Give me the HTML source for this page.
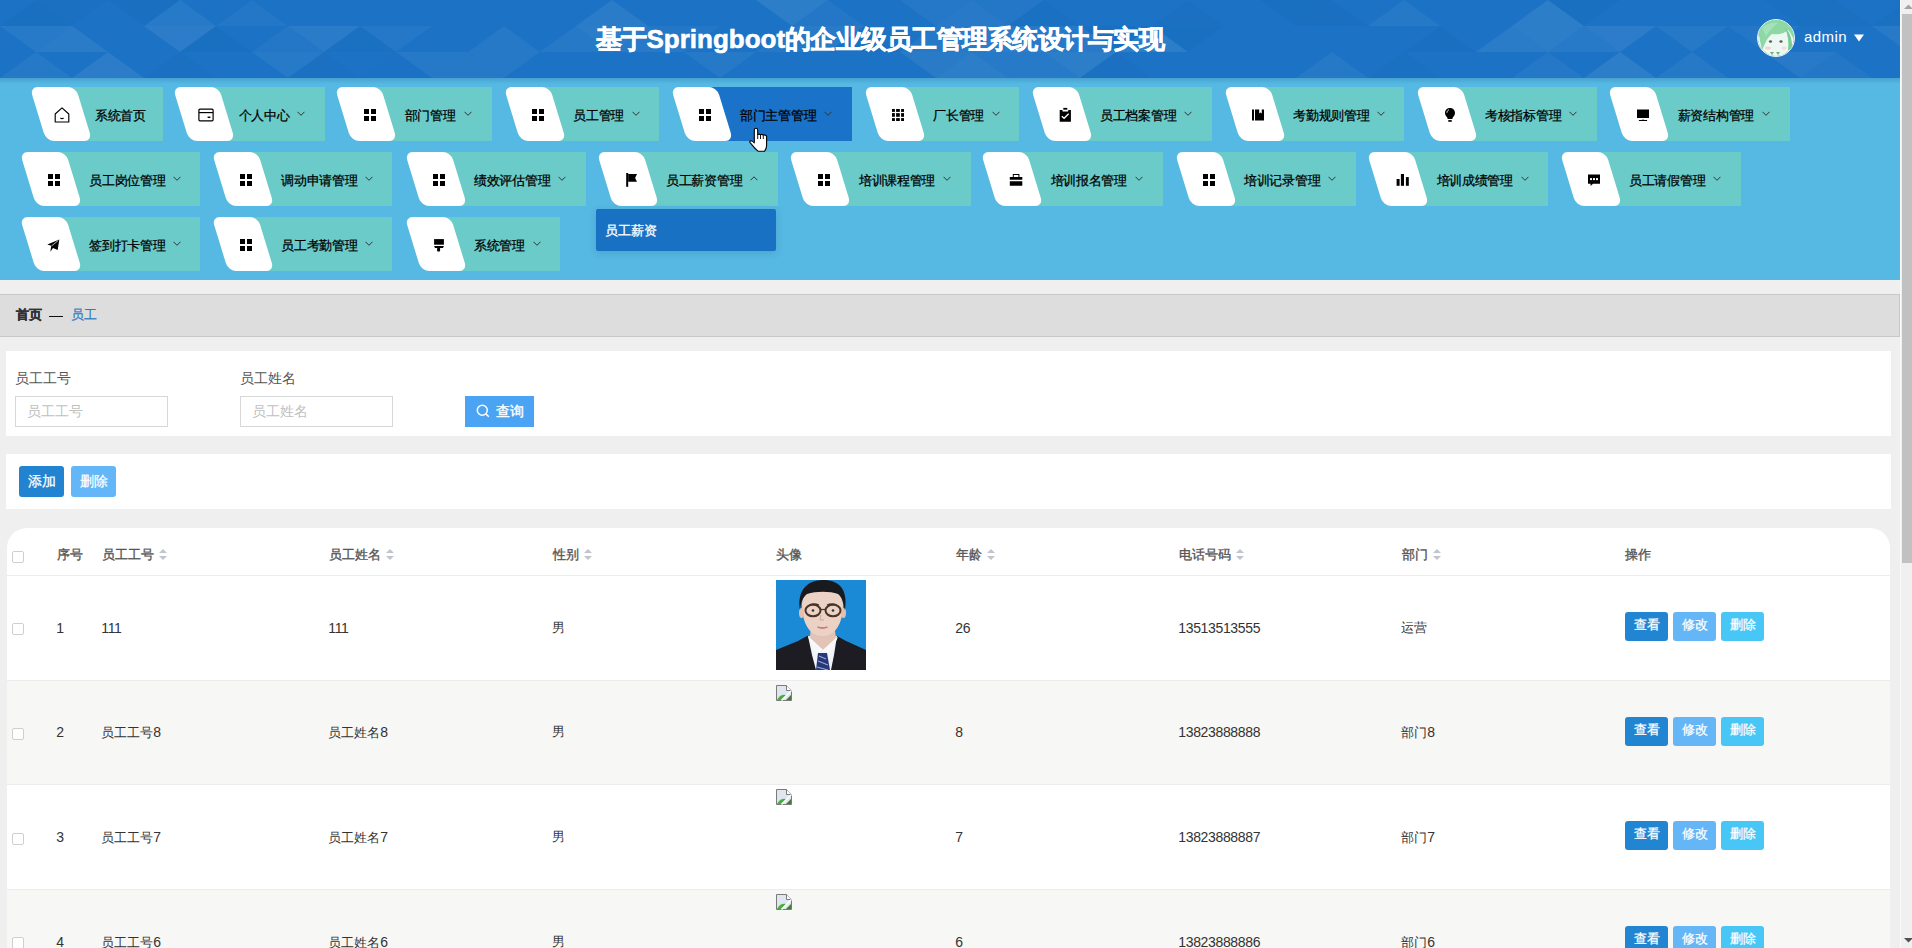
<!DOCTYPE html>
<html><head><meta charset="utf-8"><title>员工</title>
<style>
*{box-sizing:border-box;margin:0;padding:0}
html,body{width:1912px;height:948px;overflow:hidden;background:#efefef;font-family:"Liberation Sans", sans-serif;}
.abs{position:absolute}
#hdr{position:absolute;left:0;top:0;width:1900px;height:78px;background:#1c73c5;overflow:hidden}
#nav{position:absolute;left:0;top:78px;width:1900px;height:202px;background:#56b9e3}
#navsh{position:absolute;left:0;top:78px;width:1900px;height:6px;background:linear-gradient(rgba(30,90,150,0.25),rgba(30,90,150,0))}
.tb{position:absolute;height:54px}
.wp{position:absolute;width:46px;height:54px;background:#fff;border-radius:8px;transform:skewX(17deg)}
.ic{position:absolute;width:20px;height:20px;display:flex;align-items:center;justify-content:center}
.ic svg.f{fill:#000}
.nt{position:absolute;height:54px;line-height:57px;font-size:13px;color:#000;white-space:nowrap;letter-spacing:-0.3px;-webkit-text-stroke:0.25px #000}
.chev{position:absolute}
#title{position:absolute;left:596px;top:22px;font-size:26px;font-weight:bold;color:#fff;white-space:nowrap;line-height:34px;-webkit-text-stroke:0.6px #fff}
#title .cj{letter-spacing:-0.75px}
#avatar{position:absolute;left:1757px;top:18.5px;width:38px;height:38px;border-radius:50%;overflow:hidden;border:1.5px solid #e8f6f4}
#uname{position:absolute;left:1804px;top:27px;font-size:15px;color:#fff;line-height:20px;letter-spacing:0.45px}
#utri{position:absolute;left:1853.5px;top:34px}
#crumb{position:absolute;left:0;top:294px;width:1900px;height:43px;background:#dddddd;border-top:1px solid #c8c8c8;border-bottom:1px solid #c8c8c8;border-right:1px solid #c8c8c8}
.card{position:absolute;left:6px;width:1885px;background:#fff}
.lbl{position:absolute;font-size:14px;color:#555;line-height:16px;white-space:nowrap}
.inp{position:absolute;width:153px;height:31px;border:1px solid #d7d7d7;background:#fff;font-size:14px;color:#c0c0c0;line-height:29px;padding-left:11px;white-space:nowrap}
.th{position:absolute;top:546px;font-size:13px;color:#555;line-height:18px;white-space:nowrap;-webkit-text-stroke:0.35px #555}
.sort{display:inline-block;position:relative;width:8px;height:12px;margin-left:5px;vertical-align:-2px}
.sort:before{content:"";position:absolute;left:0;top:0;border-left:4px solid transparent;border-right:4px solid transparent;border-bottom:4px solid #c0c4cc}
.sort:after{content:"";position:absolute;left:0;top:7px;border-left:4px solid transparent;border-right:4px solid transparent;border-top:4px solid #c0c4cc}
.tr{position:absolute;left:7px;width:1883px;height:104.7px;border-bottom:1px solid #ececec}
.td{position:absolute;font-size:13px;color:#333;line-height:18px;white-space:nowrap}
.dg{font-size:14px;letter-spacing:-0.35px}
.cb{position:absolute;left:12px;width:12px;height:12px;border:1px solid #cfcfcf;border-radius:2px;background:#fff}
.btn{position:absolute;width:43px;height:29px;border-radius:3px;color:#fff;font-size:13px;line-height:26px;-webkit-text-stroke:0.25px #fff;text-align:center;white-space:nowrap}
</style></head><body>
<div id="hdr"><svg width="1900" height="78" style="position:absolute;left:0;top:0"><polygon points="72,-26 108,0 144,-26" fill="#ffffff" fill-opacity="0.034"/><polygon points="180,0 216,-26 252,0" fill="#ffffff" fill-opacity="0.032"/><polygon points="324,0 360,-26 396,0" fill="#ffffff" fill-opacity="0.036"/><polygon points="360,-26 396,0 432,-26" fill="#ffffff" fill-opacity="0.077"/><polygon points="432,-26 468,0 504,-26" fill="#0a4a90" fill-opacity="0.032"/><polygon points="612,0 648,-26 684,0" fill="#ffffff" fill-opacity="0.039"/><polygon points="648,-26 684,0 720,-26" fill="#ffffff" fill-opacity="0.049"/><polygon points="792,-26 828,0 864,-26" fill="#ffffff" fill-opacity="0.051"/><polygon points="828,0 864,-26 900,0" fill="#ffffff" fill-opacity="0.053"/><polygon points="864,-26 900,0 936,-26" fill="#ffffff" fill-opacity="0.065"/><polygon points="900,0 936,-26 972,0" fill="#0a4a90" fill-opacity="0.056"/><polygon points="936,-26 972,0 1008,-26" fill="#0a4a90" fill-opacity="0.044"/><polygon points="1044,0 1080,-26 1116,0" fill="#ffffff" fill-opacity="0.038"/><polygon points="1116,0 1152,-26 1188,0" fill="#ffffff" fill-opacity="0.068"/><polygon points="1152,-26 1188,0 1224,-26" fill="#0a4a90" fill-opacity="0.046"/><polygon points="1188,0 1224,-26 1260,0" fill="#ffffff" fill-opacity="0.059"/><polygon points="1224,-26 1260,0 1296,-26" fill="#ffffff" fill-opacity="0.077"/><polygon points="1260,0 1296,-26 1332,0" fill="#0a4a90" fill-opacity="0.033"/><polygon points="1296,-26 1332,0 1368,-26" fill="#0a4a90" fill-opacity="0.080"/><polygon points="1404,0 1440,-26 1476,0" fill="#ffffff" fill-opacity="0.031"/><polygon points="1548,0 1584,-26 1620,0" fill="#ffffff" fill-opacity="0.036"/><polygon points="1620,0 1656,-26 1692,0" fill="#ffffff" fill-opacity="0.034"/><polygon points="1656,-26 1692,0 1728,-26" fill="#0a4a90" fill-opacity="0.074"/><polygon points="1692,0 1728,-26 1764,0" fill="#ffffff" fill-opacity="0.044"/><polygon points="1764,0 1800,-26 1836,0" fill="#ffffff" fill-opacity="0.078"/><polygon points="1908,0 1944,-26 1980,0" fill="#ffffff" fill-opacity="0.059"/><polygon points="0,26 36,0 72,26" fill="#0a4a90" fill-opacity="0.078"/><polygon points="36,0 72,26 108,0" fill="#0a4a90" fill-opacity="0.061"/><polygon points="108,0 144,26 180,0" fill="#0a4a90" fill-opacity="0.069"/><polygon points="144,26 180,0 216,26" fill="#ffffff" fill-opacity="0.050"/><polygon points="216,26 252,0 288,26" fill="#ffffff" fill-opacity="0.033"/><polygon points="576,26 612,0 648,26" fill="#ffffff" fill-opacity="0.061"/><polygon points="756,0 792,26 828,0" fill="#ffffff" fill-opacity="0.080"/><polygon points="792,26 828,0 864,26" fill="#ffffff" fill-opacity="0.034"/><polygon points="900,0 936,26 972,0" fill="#ffffff" fill-opacity="0.038"/><polygon points="936,26 972,0 1008,26" fill="#ffffff" fill-opacity="0.056"/><polygon points="972,0 1008,26 1044,0" fill="#ffffff" fill-opacity="0.031"/><polygon points="1008,26 1044,0 1080,26" fill="#0a4a90" fill-opacity="0.073"/><polygon points="1152,26 1188,0 1224,26" fill="#0a4a90" fill-opacity="0.057"/><polygon points="1260,0 1296,26 1332,0" fill="#0a4a90" fill-opacity="0.079"/><polygon points="1296,26 1332,0 1368,26" fill="#0a4a90" fill-opacity="0.071"/><polygon points="1368,26 1404,0 1440,26" fill="#ffffff" fill-opacity="0.048"/><polygon points="1512,26 1548,0 1584,26" fill="#ffffff" fill-opacity="0.078"/><polygon points="1548,0 1584,26 1620,0" fill="#0a4a90" fill-opacity="0.079"/><polygon points="1764,0 1800,26 1836,0" fill="#0a4a90" fill-opacity="0.075"/><polygon points="1800,26 1836,0 1872,26" fill="#0a4a90" fill-opacity="0.063"/><polygon points="1872,26 1908,0 1944,26" fill="#0a4a90" fill-opacity="0.075"/><polygon points="1908,0 1944,26 1980,0" fill="#ffffff" fill-opacity="0.054"/><polygon points="1944,26 1980,0 2016,26" fill="#0a4a90" fill-opacity="0.047"/><polygon points="0,26 36,52 72,26" fill="#ffffff" fill-opacity="0.050"/><polygon points="36,52 72,26 108,52" fill="#ffffff" fill-opacity="0.066"/><polygon points="144,26 180,52 216,26" fill="#ffffff" fill-opacity="0.070"/><polygon points="180,52 216,26 252,52" fill="#0a4a90" fill-opacity="0.079"/><polygon points="252,52 288,26 324,52" fill="#ffffff" fill-opacity="0.037"/><polygon points="288,26 324,52 360,26" fill="#ffffff" fill-opacity="0.062"/><polygon points="324,52 360,26 396,52" fill="#0a4a90" fill-opacity="0.052"/><polygon points="360,26 396,52 432,26" fill="#ffffff" fill-opacity="0.041"/><polygon points="468,52 504,26 540,52" fill="#ffffff" fill-opacity="0.043"/><polygon points="540,52 576,26 612,52" fill="#ffffff" fill-opacity="0.048"/><polygon points="576,26 612,52 648,26" fill="#ffffff" fill-opacity="0.075"/><polygon points="612,52 648,26 684,52" fill="#ffffff" fill-opacity="0.055"/><polygon points="648,26 684,52 720,26" fill="#ffffff" fill-opacity="0.031"/><polygon points="756,52 792,26 828,52" fill="#ffffff" fill-opacity="0.039"/><polygon points="792,26 828,52 864,26" fill="#ffffff" fill-opacity="0.058"/><polygon points="828,52 864,26 900,52" fill="#0a4a90" fill-opacity="0.058"/><polygon points="900,52 936,26 972,52" fill="#ffffff" fill-opacity="0.042"/><polygon points="936,26 972,52 1008,26" fill="#ffffff" fill-opacity="0.055"/><polygon points="972,52 1008,26 1044,52" fill="#ffffff" fill-opacity="0.076"/><polygon points="1008,26 1044,52 1080,26" fill="#ffffff" fill-opacity="0.055"/><polygon points="1044,52 1080,26 1116,52" fill="#ffffff" fill-opacity="0.053"/><polygon points="1080,26 1116,52 1152,26" fill="#0a4a90" fill-opacity="0.077"/><polygon points="1116,52 1152,26 1188,52" fill="#ffffff" fill-opacity="0.077"/><polygon points="1152,26 1188,52 1224,26" fill="#0a4a90" fill-opacity="0.077"/><polygon points="1404,52 1440,26 1476,52" fill="#0a4a90" fill-opacity="0.069"/><polygon points="1476,52 1512,26 1548,52" fill="#ffffff" fill-opacity="0.063"/><polygon points="1512,26 1548,52 1584,26" fill="#ffffff" fill-opacity="0.078"/><polygon points="1548,52 1584,26 1620,52" fill="#ffffff" fill-opacity="0.050"/><polygon points="1584,26 1620,52 1656,26" fill="#ffffff" fill-opacity="0.072"/><polygon points="1656,26 1692,52 1728,26" fill="#ffffff" fill-opacity="0.047"/><polygon points="1728,26 1764,52 1800,26" fill="#ffffff" fill-opacity="0.031"/><polygon points="1872,26 1908,52 1944,26" fill="#ffffff" fill-opacity="0.056"/><polygon points="1908,52 1944,26 1980,52" fill="#0a4a90" fill-opacity="0.069"/><polygon points="0,78 36,52 72,78" fill="#ffffff" fill-opacity="0.044"/><polygon points="72,78 108,52 144,78" fill="#ffffff" fill-opacity="0.071"/><polygon points="144,78 180,52 216,78" fill="#0a4a90" fill-opacity="0.059"/><polygon points="252,52 288,78 324,52" fill="#ffffff" fill-opacity="0.051"/><polygon points="288,78 324,52 360,78" fill="#0a4a90" fill-opacity="0.062"/><polygon points="360,78 396,52 432,78" fill="#0a4a90" fill-opacity="0.033"/><polygon points="396,52 432,78 468,52" fill="#ffffff" fill-opacity="0.047"/><polygon points="432,78 468,52 504,78" fill="#ffffff" fill-opacity="0.043"/><polygon points="468,52 504,78 540,52" fill="#ffffff" fill-opacity="0.042"/><polygon points="684,52 720,78 756,52" fill="#ffffff" fill-opacity="0.044"/><polygon points="900,52 936,78 972,52" fill="#ffffff" fill-opacity="0.058"/><polygon points="936,78 972,52 1008,78" fill="#ffffff" fill-opacity="0.077"/><polygon points="972,52 1008,78 1044,52" fill="#ffffff" fill-opacity="0.052"/><polygon points="1008,78 1044,52 1080,78" fill="#ffffff" fill-opacity="0.050"/><polygon points="1044,52 1080,78 1116,52" fill="#ffffff" fill-opacity="0.079"/><polygon points="1080,78 1116,52 1152,78" fill="#0a4a90" fill-opacity="0.065"/><polygon points="1296,78 1332,52 1368,78" fill="#ffffff" fill-opacity="0.043"/><polygon points="1368,78 1404,52 1440,78" fill="#0a4a90" fill-opacity="0.074"/><polygon points="1512,78 1548,52 1584,78" fill="#ffffff" fill-opacity="0.038"/><polygon points="1584,78 1620,52 1656,78" fill="#ffffff" fill-opacity="0.079"/><polygon points="1656,78 1692,52 1728,78" fill="#ffffff" fill-opacity="0.045"/><polygon points="1764,52 1800,78 1836,52" fill="#ffffff" fill-opacity="0.055"/><polygon points="1800,78 1836,52 1872,78" fill="#ffffff" fill-opacity="0.030"/><polygon points="72,78 108,104 144,78" fill="#0a4a90" fill-opacity="0.056"/><polygon points="108,104 144,78 180,104" fill="#0a4a90" fill-opacity="0.066"/><polygon points="216,78 252,104 288,78" fill="#0a4a90" fill-opacity="0.037"/><polygon points="252,104 288,78 324,104" fill="#0a4a90" fill-opacity="0.032"/><polygon points="288,78 324,104 360,78" fill="#0a4a90" fill-opacity="0.061"/><polygon points="324,104 360,78 396,104" fill="#ffffff" fill-opacity="0.037"/><polygon points="360,78 396,104 432,78" fill="#0a4a90" fill-opacity="0.072"/><polygon points="396,104 432,78 468,104" fill="#0a4a90" fill-opacity="0.059"/><polygon points="432,78 468,104 504,78" fill="#ffffff" fill-opacity="0.065"/><polygon points="612,104 648,78 684,104" fill="#0a4a90" fill-opacity="0.058"/><polygon points="648,78 684,104 720,78" fill="#ffffff" fill-opacity="0.064"/><polygon points="720,78 756,104 792,78" fill="#ffffff" fill-opacity="0.067"/><polygon points="756,104 792,78 828,104" fill="#ffffff" fill-opacity="0.063"/><polygon points="792,78 828,104 864,78" fill="#ffffff" fill-opacity="0.043"/><polygon points="864,78 900,104 936,78" fill="#0a4a90" fill-opacity="0.040"/><polygon points="900,104 936,78 972,104" fill="#ffffff" fill-opacity="0.055"/><polygon points="936,78 972,104 1008,78" fill="#0a4a90" fill-opacity="0.064"/><polygon points="972,104 1008,78 1044,104" fill="#ffffff" fill-opacity="0.062"/><polygon points="1080,78 1116,104 1152,78" fill="#ffffff" fill-opacity="0.045"/><polygon points="1224,78 1260,104 1296,78" fill="#0a4a90" fill-opacity="0.065"/><polygon points="1296,78 1332,104 1368,78" fill="#ffffff" fill-opacity="0.053"/><polygon points="1368,78 1404,104 1440,78" fill="#0a4a90" fill-opacity="0.040"/><polygon points="1404,104 1440,78 1476,104" fill="#ffffff" fill-opacity="0.031"/><polygon points="1440,78 1476,104 1512,78" fill="#ffffff" fill-opacity="0.078"/><polygon points="1548,104 1584,78 1620,104" fill="#ffffff" fill-opacity="0.041"/><polygon points="1620,104 1656,78 1692,104" fill="#ffffff" fill-opacity="0.078"/><polygon points="1656,78 1692,104 1728,78" fill="#0a4a90" fill-opacity="0.055"/><polygon points="1692,104 1728,78 1764,104" fill="#0a4a90" fill-opacity="0.042"/><polygon points="1728,78 1764,104 1800,78" fill="#ffffff" fill-opacity="0.031"/><polygon points="1764,104 1800,78 1836,104" fill="#ffffff" fill-opacity="0.053"/><polygon points="1908,104 1944,78 1980,104" fill="#0a4a90" fill-opacity="0.030"/><polygon points="1944,78 1980,104 2016,78" fill="#0a4a90" fill-opacity="0.036"/><polygon points="1980,104 2016,78 2052,104" fill="#ffffff" fill-opacity="0.075"/></svg>
<div id="title"><span class="cj">基于</span>Springboot<span class="cj">的企业级员工管理系统设计与实现</span></div>
<div id="avatar"><svg width="38" height="38" viewBox="0 0 38 38"><rect width="38" height="38" fill="#eef8f2"/>
<path d="M0 0 H38 V26 C36 20 34 14 30 10 C26 14 20 15 14 14 C10 17 8 21 6 26 L4 30 C2 22 1 14 0 10 Z" fill="#8ed8a6"/>
<path d="M27 8 C32 12 35 20 34 32 L30 30 C31 22 30 15 27 8 Z" fill="#79cc93"/>
<path d="M4 8 C8 4 14 2 20 3 C16 6 12 10 8 16 Z" fill="#a4e2b8"/>
<ellipse cx="12.5" cy="21.5" rx="1.6" ry="1.3" fill="#555e58"/><ellipse cx="23" cy="21.5" rx="1.6" ry="1.3" fill="#555e58"/>
<ellipse cx="10" cy="28" rx="3" ry="1.6" fill="#f6d3c8"/><ellipse cx="26" cy="28" rx="2.5" ry="1.5" fill="#f6dcd0"/>
<path d="M12 32 L14 35 L16 32 Z M18 32 L20 35 L22 32 Z" fill="#6fae7e"/></svg></div>
<div id="uname">admin</div>
<svg id="utri" width="10" height="8" viewBox="0 0 10 8"><path d="M0 0.5 H10 L5 7.5 Z" fill="#fff"/></svg>
</div>
<div id="nav">
</div>
<div id="navsh"></div>
<div class="tb" style="left:60.8px;top:87px;width:101.9px;background:#6bcbc9"></div>
<div class="wp" style="left:37.8px;top:87px"></div>
<div class="ic" style="left:51.6px;top:105px"><svg width="16" height="16" viewBox="0 0 16 16" fill="none" stroke="#000" stroke-width="1.15"><path d="M1.2 7 L8 0.9 L14.8 7 V15 H1.2 Z" stroke-linejoin="round"/><path d="M6.4 11 Q8 12.3 9.6 11" /></svg></div>
<div class="nt" style="left:95.0px;top:87px">系统首页</div>
<div class="tb" style="left:204.4px;top:87px;width:120.9px;background:#6bcbc9"></div>
<div class="wp" style="left:181.4px;top:87px"></div>
<div class="ic" style="left:195.8px;top:105px"><svg width="16" height="16" viewBox="0 0 16 16" fill="none" stroke="#000" stroke-width="1.2"><rect x="0.9" y="2.2" width="14.2" height="11.6" rx="1"/><line x1="0.9" y1="5.6" x2="15.1" y2="5.6"/><line x1="9.6" y1="10.3" x2="12.4" y2="10.3" stroke-width="1.5"/></svg></div>
<div class="nt" style="left:238.7px;top:87px">个人中心</div>
<svg class="chev" style="left:297.4px;top:111px" width="8" height="5" viewBox="0 0 8 5"><path d="M0.5 0.8 L4 4.3 L7.5 0.8" fill="none" stroke="#333" stroke-width="1"/></svg>
<div class="tb" style="left:366.3px;top:87px;width:125.5px;background:#6bcbc9"></div>
<div class="wp" style="left:343.3px;top:87px"></div>
<div class="ic" style="left:359.5px;top:105px"><svg class="f" width="12" height="12" viewBox="0 0 12 12"><rect x="0" y="0" width="5" height="5"/><rect x="7" y="0" width="5" height="5"/><rect x="0" y="7" width="5" height="5"/><rect x="7" y="7" width="5" height="5"/></svg></div>
<div class="nt" style="left:404.8px;top:87px">部门管理</div>
<svg class="chev" style="left:463.5px;top:111px" width="8" height="5" viewBox="0 0 8 5"><path d="M0.5 0.8 L4 4.3 L7.5 0.8" fill="none" stroke="#333" stroke-width="1"/></svg>
<div class="tb" style="left:534.7px;top:87px;width:124.2px;background:#6bcbc9"></div>
<div class="wp" style="left:511.7px;top:87px"></div>
<div class="ic" style="left:527.9px;top:105px"><svg class="f" width="12" height="12" viewBox="0 0 12 12"><rect x="0" y="0" width="5" height="5"/><rect x="7" y="0" width="5" height="5"/><rect x="0" y="7" width="5" height="5"/><rect x="7" y="7" width="5" height="5"/></svg></div>
<div class="nt" style="left:573.2px;top:87px">员工管理</div>
<svg class="chev" style="left:631.9px;top:111px" width="8" height="5" viewBox="0 0 8 5"><path d="M0.5 0.8 L4 4.3 L7.5 0.8" fill="none" stroke="#333" stroke-width="1"/></svg>
<div class="tb" style="left:701.6px;top:87px;width:150.1px;background:#1a73c8"></div>
<div class="wp" style="left:678.6px;top:87px"></div>
<div class="ic" style="left:694.8px;top:105px"><svg class="f" width="12" height="12" viewBox="0 0 12 12"><rect x="0" y="0" width="5" height="5"/><rect x="7" y="0" width="5" height="5"/><rect x="0" y="7" width="5" height="5"/><rect x="7" y="7" width="5" height="5"/></svg></div>
<div class="nt" style="left:740.1px;top:87px">部门主管管理</div>
<svg class="chev" style="left:824.1px;top:111px" width="8" height="5" viewBox="0 0 8 5"><path d="M0.5 0.8 L4 4.3 L7.5 0.8" fill="none" stroke="#333" stroke-width="1"/></svg>
<div class="tb" style="left:894.7px;top:87px;width:124.2px;background:#6bcbc9"></div>
<div class="wp" style="left:871.7px;top:87px"></div>
<div class="ic" style="left:887.9px;top:105px"><svg class="f" width="12" height="12" viewBox="0 0 12 12"><rect x="0" y="0" width="2.9" height="2.9"/><rect x="0" y="4.1" width="2.9" height="3.7"/><rect x="0" y="9.1" width="2.9" height="2.9"/><rect x="4.1" y="0" width="3.7" height="2.9"/><rect x="4.1" y="4.1" width="3.7" height="3.7"/><rect x="4.1" y="9.1" width="3.7" height="2.9"/><rect x="9.1" y="0" width="2.9" height="2.9"/><rect x="9.1" y="4.1" width="2.9" height="3.7"/><rect x="9.1" y="9.1" width="2.9" height="2.9"/></svg></div>
<div class="nt" style="left:933.2px;top:87px">厂长管理</div>
<svg class="chev" style="left:991.9px;top:111px" width="8" height="5" viewBox="0 0 8 5"><path d="M0.5 0.8 L4 4.3 L7.5 0.8" fill="none" stroke="#333" stroke-width="1"/></svg>
<div class="tb" style="left:1061.6px;top:87px;width:150.1px;background:#6bcbc9"></div>
<div class="wp" style="left:1038.6px;top:87px"></div>
<div class="ic" style="left:1054.8px;top:105px"><svg class="f" width="14" height="16" viewBox="0 0 14 16"><path d="M1.7 3 H4.5 V4.5 H10.2 V3 H12.9 V14.8 H1.7 Z"/><rect x="5.3" y="0.9" width="4" height="1.8"/><path d="M3.8 9.2 L6.1 11.3 L10.7 6.7" fill="none" stroke="#fff" stroke-width="1.3"/></svg></div>
<div class="nt" style="left:1100.1px;top:87px">员工档案管理</div>
<svg class="chev" style="left:1184.1px;top:111px" width="8" height="5" viewBox="0 0 8 5"><path d="M0.5 0.8 L4 4.3 L7.5 0.8" fill="none" stroke="#333" stroke-width="1"/></svg>
<div class="tb" style="left:1254.7px;top:87px;width:149.1px;background:#6bcbc9"></div>
<div class="wp" style="left:1231.7px;top:87px"></div>
<div class="ic" style="left:1247.9px;top:105px"><svg class="f" width="14" height="14" viewBox="0 0 14 14"><rect x="1" y="1.5" width="2" height="11"/><path d="M4 1.5 H13 V12.5 H4 Z M8.2 1.5 V5.6 L9.5 4.6 L10.8 5.6 V1.5 Z" fill-rule="evenodd"/></svg></div>
<div class="nt" style="left:1293.2px;top:87px">考勤规则管理</div>
<svg class="chev" style="left:1377.2px;top:111px" width="8" height="5" viewBox="0 0 8 5"><path d="M0.5 0.8 L4 4.3 L7.5 0.8" fill="none" stroke="#333" stroke-width="1"/></svg>
<div class="tb" style="left:1446.5px;top:87px;width:150.1px;background:#6bcbc9"></div>
<div class="wp" style="left:1423.5px;top:87px"></div>
<div class="ic" style="left:1439.7px;top:105px"><svg class="f" width="14" height="16" viewBox="0 0 14 16"><path d="M7 1 C10.1 1 12 3.2 12 6 C12 8 10.9 9.2 9.8 10.4 L9.3 12.1 H4.7 L4.2 10.4 C3.1 9.2 2 8 2 6 C2 3.2 3.9 1 7 1 Z"/><ellipse cx="7" cy="13.9" rx="2.1" ry="0.95"/><path d="M3.9 5.8 C4 4.2 4.9 3.2 6 2.8" fill="none" stroke="#fff" stroke-width="0.9"/></svg></div>
<div class="nt" style="left:1485.0px;top:87px">考核指标管理</div>
<svg class="chev" style="left:1569.0px;top:111px" width="8" height="5" viewBox="0 0 8 5"><path d="M0.5 0.8 L4 4.3 L7.5 0.8" fill="none" stroke="#333" stroke-width="1"/></svg>
<div class="tb" style="left:1639.3px;top:87px;width:150.7px;background:#6bcbc9"></div>
<div class="wp" style="left:1616.3px;top:87px"></div>
<div class="ic" style="left:1632.5px;top:105px"><svg class="f" width="14" height="14" viewBox="0 0 14 14"><rect x="1" y="1.5" width="12" height="8.5"/><path d="M2.9 11.9 H5.6 Q7 10.9 8.4 11.9 H11.1 V13 H2.9 Z"/></svg></div>
<div class="nt" style="left:1677.8px;top:87px">薪资结构管理</div>
<svg class="chev" style="left:1761.8px;top:111px" width="8" height="5" viewBox="0 0 8 5"><path d="M0.5 0.8 L4 4.3 L7.5 0.8" fill="none" stroke="#333" stroke-width="1"/></svg>
<div class="tb" style="left:50.8px;top:152px;width:148.9px;background:#6bcbc9"></div>
<div class="wp" style="left:27.8px;top:152px"></div>
<div class="ic" style="left:44.0px;top:170px"><svg class="f" width="12" height="12" viewBox="0 0 12 12"><rect x="0" y="0" width="5" height="5"/><rect x="7" y="0" width="5" height="5"/><rect x="0" y="7" width="5" height="5"/><rect x="7" y="7" width="5" height="5"/></svg></div>
<div class="nt" style="left:89.3px;top:152px">员工岗位管理</div>
<svg class="chev" style="left:173.3px;top:176px" width="8" height="5" viewBox="0 0 8 5"><path d="M0.5 0.8 L4 4.3 L7.5 0.8" fill="none" stroke="#333" stroke-width="1"/></svg>
<div class="tb" style="left:242.8px;top:152px;width:149.6px;background:#6bcbc9"></div>
<div class="wp" style="left:219.8px;top:152px"></div>
<div class="ic" style="left:236.0px;top:170px"><svg class="f" width="12" height="12" viewBox="0 0 12 12"><rect x="0" y="0" width="5" height="5"/><rect x="7" y="0" width="5" height="5"/><rect x="0" y="7" width="5" height="5"/><rect x="7" y="7" width="5" height="5"/></svg></div>
<div class="nt" style="left:281.3px;top:152px">调动申请管理</div>
<svg class="chev" style="left:365.3px;top:176px" width="8" height="5" viewBox="0 0 8 5"><path d="M0.5 0.8 L4 4.3 L7.5 0.8" fill="none" stroke="#333" stroke-width="1"/></svg>
<div class="tb" style="left:435.6px;top:152px;width:150.4px;background:#6bcbc9"></div>
<div class="wp" style="left:412.6px;top:152px"></div>
<div class="ic" style="left:428.8px;top:170px"><svg class="f" width="12" height="12" viewBox="0 0 12 12"><rect x="0" y="0" width="5" height="5"/><rect x="7" y="0" width="5" height="5"/><rect x="0" y="7" width="5" height="5"/><rect x="7" y="7" width="5" height="5"/></svg></div>
<div class="nt" style="left:474.1px;top:152px">绩效评估管理</div>
<svg class="chev" style="left:558.1px;top:176px" width="8" height="5" viewBox="0 0 8 5"><path d="M0.5 0.8 L4 4.3 L7.5 0.8" fill="none" stroke="#333" stroke-width="1"/></svg>
<div class="tb" style="left:627.6px;top:152px;width:150.4px;background:#6bcbc9"></div>
<div class="wp" style="left:604.6px;top:152px"></div>
<div class="ic" style="left:620.8px;top:170px"><svg class="f" width="14" height="16" viewBox="0 0 14 16"><rect x="2.2" y="1" width="2" height="13.8"/><path d="M4.2 2 H13 L11.1 5.9 L13 9.7 H4.2 Z"/></svg></div>
<div class="nt" style="left:666.1px;top:152px">员工薪资管理</div>
<svg class="chev" style="left:750.1px;top:176px" width="8" height="5" viewBox="0 0 8 5"><path d="M0.5 4.3 L4 0.8 L7.5 4.3" fill="none" stroke="#333" stroke-width="1"/></svg>
<div class="tb" style="left:820.4px;top:152px;width:150.9px;background:#6bcbc9"></div>
<div class="wp" style="left:797.4px;top:152px"></div>
<div class="ic" style="left:813.6px;top:170px"><svg class="f" width="12" height="12" viewBox="0 0 12 12"><rect x="0" y="0" width="5" height="5"/><rect x="7" y="0" width="5" height="5"/><rect x="0" y="7" width="5" height="5"/><rect x="7" y="7" width="5" height="5"/></svg></div>
<div class="nt" style="left:858.9px;top:152px">培训课程管理</div>
<svg class="chev" style="left:942.9px;top:176px" width="8" height="5" viewBox="0 0 8 5"><path d="M0.5 0.8 L4 4.3 L7.5 0.8" fill="none" stroke="#333" stroke-width="1"/></svg>
<div class="tb" style="left:1012.2px;top:152px;width:150.7px;background:#6bcbc9"></div>
<div class="wp" style="left:989.2px;top:152px"></div>
<div class="ic" style="left:1005.4px;top:170px"><svg class="f" width="14" height="14" viewBox="0 0 14 14" style="margin-left:2px"><path d="M0.8 4 H13.3 V6.8 H0.8 Z M0.8 8.2 H13.3 V12.8 H0.8 Z M3.8 1 H10.4 V4 H9.4 V2 H4.8 V4 H3.8 Z"/></svg></div>
<div class="nt" style="left:1050.7px;top:152px">培训报名管理</div>
<svg class="chev" style="left:1134.7px;top:176px" width="8" height="5" viewBox="0 0 8 5"><path d="M0.5 0.8 L4 4.3 L7.5 0.8" fill="none" stroke="#333" stroke-width="1"/></svg>
<div class="tb" style="left:1205.6px;top:152px;width:150.4px;background:#6bcbc9"></div>
<div class="wp" style="left:1182.6px;top:152px"></div>
<div class="ic" style="left:1198.8px;top:170px"><svg class="f" width="12" height="12" viewBox="0 0 12 12"><rect x="0" y="0" width="5" height="5"/><rect x="7" y="0" width="5" height="5"/><rect x="0" y="7" width="5" height="5"/><rect x="7" y="7" width="5" height="5"/></svg></div>
<div class="nt" style="left:1244.1px;top:152px">培训记录管理</div>
<svg class="chev" style="left:1328.1px;top:176px" width="8" height="5" viewBox="0 0 8 5"><path d="M0.5 0.8 L4 4.3 L7.5 0.8" fill="none" stroke="#333" stroke-width="1"/></svg>
<div class="tb" style="left:1398.1px;top:152px;width:150.0px;background:#6bcbc9"></div>
<div class="wp" style="left:1375.1px;top:152px"></div>
<div class="ic" style="left:1391.3px;top:170px"><svg class="f" width="14" height="14" viewBox="0 0 14 14" style="margin-left:1px"><rect x="1.6" y="6" width="3" height="6.8"/><rect x="5.9" y="1" width="3.1" height="11.8"/><rect x="10.9" y="4.1" width="2.9" height="8.7"/></svg></div>
<div class="nt" style="left:1436.6px;top:152px">培训成绩管理</div>
<svg class="chev" style="left:1520.6px;top:176px" width="8" height="5" viewBox="0 0 8 5"><path d="M0.5 0.8 L4 4.3 L7.5 0.8" fill="none" stroke="#333" stroke-width="1"/></svg>
<div class="tb" style="left:1590.6px;top:152px;width:150.6px;background:#6bcbc9"></div>
<div class="wp" style="left:1567.6px;top:152px"></div>
<div class="ic" style="left:1583.8px;top:170px"><svg class="f" width="14" height="14" viewBox="0 0 14 14"><path d="M1 1.5 H13 V10.8 H6 L3.6 13 V10.8 H1 Z"/><rect x="3" y="5.1" width="2" height="2" fill="#fff"/><rect x="6" y="5.1" width="2" height="2" fill="#fff"/><rect x="9" y="5.1" width="2" height="2" fill="#fff"/></svg></div>
<div class="nt" style="left:1629.1px;top:152px">员工请假管理</div>
<svg class="chev" style="left:1713.1px;top:176px" width="8" height="5" viewBox="0 0 8 5"><path d="M0.5 0.8 L4 4.3 L7.5 0.8" fill="none" stroke="#333" stroke-width="1"/></svg>
<div class="tb" style="left:50.8px;top:217px;width:148.9px;background:#6bcbc9"></div>
<div class="wp" style="left:27.8px;top:217px"></div>
<div class="ic" style="left:44.0px;top:235px"><svg class="f" width="14" height="16" viewBox="0 0 14 16"><path d="M12.3 2.6 L0.3 7.4 L4.2 8.8 L3.4 14.7 L6 11.1 L10.7 13.1 Z"/><path d="M11.2 3.6 L4.4 9" fill="none" stroke="#fff" stroke-width="0.7"/></svg></div>
<div class="nt" style="left:89.3px;top:217px">签到打卡管理</div>
<svg class="chev" style="left:173.3px;top:241px" width="8" height="5" viewBox="0 0 8 5"><path d="M0.5 0.8 L4 4.3 L7.5 0.8" fill="none" stroke="#333" stroke-width="1"/></svg>
<div class="tb" style="left:242.8px;top:217px;width:149.6px;background:#6bcbc9"></div>
<div class="wp" style="left:219.8px;top:217px"></div>
<div class="ic" style="left:236.0px;top:235px"><svg class="f" width="12" height="12" viewBox="0 0 12 12"><rect x="0" y="0" width="5" height="5"/><rect x="7" y="0" width="5" height="5"/><rect x="0" y="7" width="5" height="5"/><rect x="7" y="7" width="5" height="5"/></svg></div>
<div class="nt" style="left:281.3px;top:217px">员工考勤管理</div>
<svg class="chev" style="left:365.3px;top:241px" width="8" height="5" viewBox="0 0 8 5"><path d="M0.5 0.8 L4 4.3 L7.5 0.8" fill="none" stroke="#333" stroke-width="1"/></svg>
<div class="tb" style="left:435.6px;top:217px;width:124.3px;background:#6bcbc9"></div>
<div class="wp" style="left:412.6px;top:217px"></div>
<div class="ic" style="left:428.8px;top:235px"><svg class="f" width="14" height="16" viewBox="0 0 14 16"><rect x="2.1" y="2.1" width="9.8" height="5.6"/><path d="M2.1 9.1 H11.9 L11 11 H3 Z"/><rect x="5.1" y="10.8" width="3" height="3.8" rx="0.8"/></svg></div>
<div class="nt" style="left:474.1px;top:217px">系统管理</div>
<svg class="chev" style="left:532.8px;top:241px" width="8" height="5" viewBox="0 0 8 5"><path d="M0.5 0.8 L4 4.3 L7.5 0.8" fill="none" stroke="#333" stroke-width="1"/></svg>
<div class="abs" style="left:596px;top:209px;width:180px;height:42px;background:#1871c3;border-radius:2px;box-shadow:0 2px 8px rgba(0,0,0,0.12)"></div>
<div class="abs" style="left:605px;top:209.5px;height:42px;line-height:42px;font-size:13px;color:#fff;white-space:nowrap;-webkit-text-stroke:0.3px #fff">员工薪资</div>
<svg class="abs" style="left:748px;top:126px" width="21" height="28" viewBox="0 0 21 28"><path d="M6.3 4 Q6.3 2.2 8 2.2 Q9.7 2.2 9.7 4 V8.6 Q11.1 7.7 12.5 8.7 Q13.9 7.9 15.3 9.1 Q17.1 8.4 18.6 10.2 V19.5 Q18.6 22.6 16.6 25.2 H10 Q7.4 23 4.6 19.6 L1.9 16.4 Q1.4 14.8 3 14.7 Q4.6 14.8 6.3 16.8 Z" fill="#fff" stroke="#000" stroke-width="1.1" stroke-linejoin="round"/><path d="M9.7 8.6 V13 M12.5 8.7 V13 M15.3 9.1 V13" stroke="#000" stroke-width="0.9"/></svg>
<div id="crumb"></div>
<div class="abs" style="left:16px;top:306px;font-size:13px;font-weight:bold;color:#303133;line-height:18px;-webkit-text-stroke:0.3px #303133">首页</div>
<div class="abs" style="left:49px;top:315.5px;width:14px;height:1.3px;background:#111"></div>
<div class="abs" style="left:71px;top:306px;font-size:13px;color:#2f7bc0;line-height:18px;-webkit-text-stroke:0.2px #2f7bc0">员工</div>
<div class="card" style="top:351px;height:85px"></div>
<div class="lbl" style="left:15px;top:370px">员工工号</div>
<div class="inp" style="left:15px;top:396px">员工工号</div>
<div class="lbl" style="left:240px;top:370px">员工姓名</div>
<div class="inp" style="left:240px;top:396px">员工姓名</div>
<div class="abs" style="left:465px;top:396px;width:69px;height:31px;background:#4aa3f3;color:#fff;font-size:14px;line-height:31px;white-space:nowrap">
<svg style="position:absolute;left:11px;top:8px" width="14" height="14" viewBox="0 0 14 14"><circle cx="6.3" cy="6.3" r="5" fill="none" stroke="#fff" stroke-width="1.5"/><path d="M10 10 L12.8 12.8" stroke="#fff" stroke-width="1.5"/></svg>
<span style="position:absolute;left:31px;top:0;-webkit-text-stroke:0.4px #fff">查询</span></div>
<div class="card" style="top:454px;height:55px"></div>
<div class="btn" style="left:19px;top:466px;width:45px;height:31px;line-height:31px;font-size:14px;background:#2284d0">添加</div>
<div class="btn" style="left:71px;top:466px;width:45px;height:31px;line-height:31px;font-size:14px;background:#63b6f7">删除</div>
<div class="card" style="top:528px;left:7px;width:1883px;height:430px;border-radius:20px 20px 0 0"></div>
<div class="cb" style="top:551px"></div>
<div class="th" style="left:57px">序号</div><div class="th" style="left:102px">员工工号<span class=sort></span></div><div class="th" style="left:329px">员工姓名<span class=sort></span></div><div class="th" style="left:553px">性别<span class=sort></span></div><div class="th" style="left:776px">头像</div><div class="th" style="left:956px">年龄<span class=sort></span></div><div class="th" style="left:1179px">电话号码<span class=sort></span></div><div class="th" style="left:1402px">部门<span class=sort></span></div><div class="th" style="left:1625px">操作</div>
<div class="tr" style="top:576.0px;background:#ffffff"></div>
<div class="cb" style="top:623.3px"></div>
<div class="td" style="left:56.3px;top:618.5px"><span class="dg">1</span></div>
<div class="td" style="left:101.3px;top:618.5px"><span class="dg">111</span></div>
<div class="td" style="left:328.3px;top:618.5px"><span class="dg">111</span></div>
<div class="td" style="left:552.3px;top:618.5px">男</div>
<div style="position:absolute;left:776px;top:580.0px;width:90px;height:90px"><svg width="90" height="90" viewBox="0 0 90 90">
<rect width="90" height="90" fill="#1a89d6"/>
<path d="M0 70 L22 61 L31 56 L61 56 L70 61 L90 70 V90 H0 Z" fill="#1c1c22"/>
<path d="M32 56 L61 56 L58 75 L55 90 H40 L36 75 Z" fill="#f2f4f8"/>
<path d="M35 44 L58 44 L60 58 L47 70 L34 58 Z" fill="#e3c3b5"/>
<path d="M34 58 L47 70 L40 74 L32 57 Z M60 58 L47 70 L54 74 L62 57 Z" fill="#f7f8fb"/>
<path d="M26 24 C26 44 34 56 46.5 56 C59 56 67 44 67 24 C67 14 60 9 46.5 9 C33 9 26 14 26 24 Z" fill="#ecd2c4"/>
<ellipse cx="25.5" cy="33" rx="2.5" ry="5" fill="#e2bfae"/>
<ellipse cx="67.5" cy="33" rx="2.5" ry="5" fill="#e2bfae"/>
<path d="M24 30 C21 12 30 0 47 0 C64 0 72 10 69 30 C67 22 66 17 62 14 C54 11 40 11 31 14 C27 17 25 22 24 30 Z" fill="#191a1e"/>
<path d="M33 25 Q38 23 43 25 M51 25 Q56 23 61 25" stroke="#3a2f2a" stroke-width="1.3" fill="none"/>
<ellipse cx="37" cy="30.5" rx="7.5" ry="5.8" fill="none" stroke="#4a3428" stroke-width="2"/>
<ellipse cx="57" cy="30.5" rx="7.5" ry="5.8" fill="none" stroke="#4a3428" stroke-width="2"/>
<line x1="44.5" y1="29.5" x2="49.5" y2="29.5" stroke="#4a3428" stroke-width="1.2"/>
<circle cx="37" cy="30.5" r="1.3" fill="#333"/><circle cx="57" cy="30.5" r="1.3" fill="#333"/>
<path d="M45 35 L44 40 L48 40" stroke="#c9a595" stroke-width="0.9" fill="none"/>
<path d="M41.5 47 Q46.5 49 51.5 47" stroke="#c47f7a" stroke-width="1.8" fill="none"/>
<path d="M42 73 L51 73 L54 90 H40 Z" fill="#27387a"/>
<path d="M43 76 L50 79 M42 81 L52 85 M41 87 L52 90" stroke="#9aa8d8" stroke-width="1.1"/>
</svg></div>
<div class="td" style="left:955.3px;top:618.5px"><span class="dg">26</span></div>
<div class="td" style="left:1178.3px;top:618.5px"><span class="dg">13513513555</span></div>
<div class="td" style="left:1401.3px;top:618.5px">运营</div>
<div class="btn" style="left:1625px;top:612.0px;background:#2285d2">查看</div>
<div class="btn" style="left:1673px;top:612.0px;background:#64b6f7">修改</div>
<div class="btn" style="left:1721px;top:612.0px;background:#48c7f6">删除</div>
<div class="tr" style="top:680.7px;background:#f7f7f5"></div>
<div class="cb" style="top:728.0px"></div>
<div class="td" style="left:56.3px;top:723.2px"><span class="dg">2</span></div>
<div class="td" style="left:101.3px;top:723.2px">员工工号<span class="dg">8</span></div>
<div class="td" style="left:328.3px;top:723.2px">员工姓名<span class="dg">8</span></div>
<div class="td" style="left:552.3px;top:723.2px">男</div>
<div style="position:absolute;left:776px;top:684.7px;width:16px;height:16px"><svg width="16" height="16" viewBox="0 0 16 16">
<path d="M0.5 0.5 H10.5 L15.5 5.5 V15.5 H0.5 Z" fill="#dfe6f0" stroke="#7a7a7a" stroke-width="1"/>
<path d="M10.5 0.5 V5.5 H15.5" fill="#fff" stroke="#7a7a7a" stroke-width="1"/>
<path d="M1 15 Q4 9 10 10 L5 15 Z" fill="#4cae3c"/>
<path d="M15 10 L10 15 H15 Z" fill="#4a7a3a"/>
<path d="M5.5 15.5 L15.5 5.5" stroke="#fff" stroke-width="1.5"/>
</svg></div>
<div class="td" style="left:955.3px;top:723.2px"><span class="dg">8</span></div>
<div class="td" style="left:1178.3px;top:723.2px"><span class="dg">13823888888</span></div>
<div class="td" style="left:1401.3px;top:723.2px">部门<span class="dg">8</span></div>
<div class="btn" style="left:1625px;top:716.7px;background:#2285d2">查看</div>
<div class="btn" style="left:1673px;top:716.7px;background:#64b6f7">修改</div>
<div class="btn" style="left:1721px;top:716.7px;background:#48c7f6">删除</div>
<div class="tr" style="top:785.4px;background:#ffffff"></div>
<div class="cb" style="top:832.7px"></div>
<div class="td" style="left:56.3px;top:827.9px"><span class="dg">3</span></div>
<div class="td" style="left:101.3px;top:827.9px">员工工号<span class="dg">7</span></div>
<div class="td" style="left:328.3px;top:827.9px">员工姓名<span class="dg">7</span></div>
<div class="td" style="left:552.3px;top:827.9px">男</div>
<div style="position:absolute;left:776px;top:789.4px;width:16px;height:16px"><svg width="16" height="16" viewBox="0 0 16 16">
<path d="M0.5 0.5 H10.5 L15.5 5.5 V15.5 H0.5 Z" fill="#dfe6f0" stroke="#7a7a7a" stroke-width="1"/>
<path d="M10.5 0.5 V5.5 H15.5" fill="#fff" stroke="#7a7a7a" stroke-width="1"/>
<path d="M1 15 Q4 9 10 10 L5 15 Z" fill="#4cae3c"/>
<path d="M15 10 L10 15 H15 Z" fill="#4a7a3a"/>
<path d="M5.5 15.5 L15.5 5.5" stroke="#fff" stroke-width="1.5"/>
</svg></div>
<div class="td" style="left:955.3px;top:827.9px"><span class="dg">7</span></div>
<div class="td" style="left:1178.3px;top:827.9px"><span class="dg">13823888887</span></div>
<div class="td" style="left:1401.3px;top:827.9px">部门<span class="dg">7</span></div>
<div class="btn" style="left:1625px;top:821.4px;background:#2285d2">查看</div>
<div class="btn" style="left:1673px;top:821.4px;background:#64b6f7">修改</div>
<div class="btn" style="left:1721px;top:821.4px;background:#48c7f6">删除</div>
<div class="tr" style="top:890.1px;background:#f7f7f5"></div>
<div class="cb" style="top:937.4px"></div>
<div class="td" style="left:56.3px;top:932.6px"><span class="dg">4</span></div>
<div class="td" style="left:101.3px;top:932.6px">员工工号<span class="dg">6</span></div>
<div class="td" style="left:328.3px;top:932.6px">员工姓名<span class="dg">6</span></div>
<div class="td" style="left:552.3px;top:932.6px">男</div>
<div style="position:absolute;left:776px;top:894.1px;width:16px;height:16px"><svg width="16" height="16" viewBox="0 0 16 16">
<path d="M0.5 0.5 H10.5 L15.5 5.5 V15.5 H0.5 Z" fill="#dfe6f0" stroke="#7a7a7a" stroke-width="1"/>
<path d="M10.5 0.5 V5.5 H15.5" fill="#fff" stroke="#7a7a7a" stroke-width="1"/>
<path d="M1 15 Q4 9 10 10 L5 15 Z" fill="#4cae3c"/>
<path d="M15 10 L10 15 H15 Z" fill="#4a7a3a"/>
<path d="M5.5 15.5 L15.5 5.5" stroke="#fff" stroke-width="1.5"/>
</svg></div>
<div class="td" style="left:955.3px;top:932.6px"><span class="dg">6</span></div>
<div class="td" style="left:1178.3px;top:932.6px"><span class="dg">13823888886</span></div>
<div class="td" style="left:1401.3px;top:932.6px">部门<span class="dg">6</span></div>
<div class="btn" style="left:1625px;top:926.1px;background:#2285d2">查看</div>
<div class="btn" style="left:1673px;top:926.1px;background:#64b6f7">修改</div>
<div class="btn" style="left:1721px;top:926.1px;background:#48c7f6">删除</div>
<div class="abs" style="left:7px;top:575px;width:1883px;height:1px;background:#ececec"></div>
<div class="abs" style="left:1900px;top:0;width:12px;height:948px;background:#f0f0f0;border-left:1px solid #fafafa"></div>
<div class="abs" style="left:1902px;top:14px;width:10px;height:549px;background:#c1c1c1"></div>
<svg class="abs" style="left:1904px;top:4px" width="9" height="6" viewBox="0 0 9 6"><path d="M0 5 L4.5 0.5 L9 5 Z" fill="#a3a3a3"/></svg>
<svg class="abs" style="left:1904px;top:937px" width="9" height="6" viewBox="0 0 9 6"><path d="M0 1 L4.5 5.5 L9 1 Z" fill="#505050"/></svg>
</body></html>
